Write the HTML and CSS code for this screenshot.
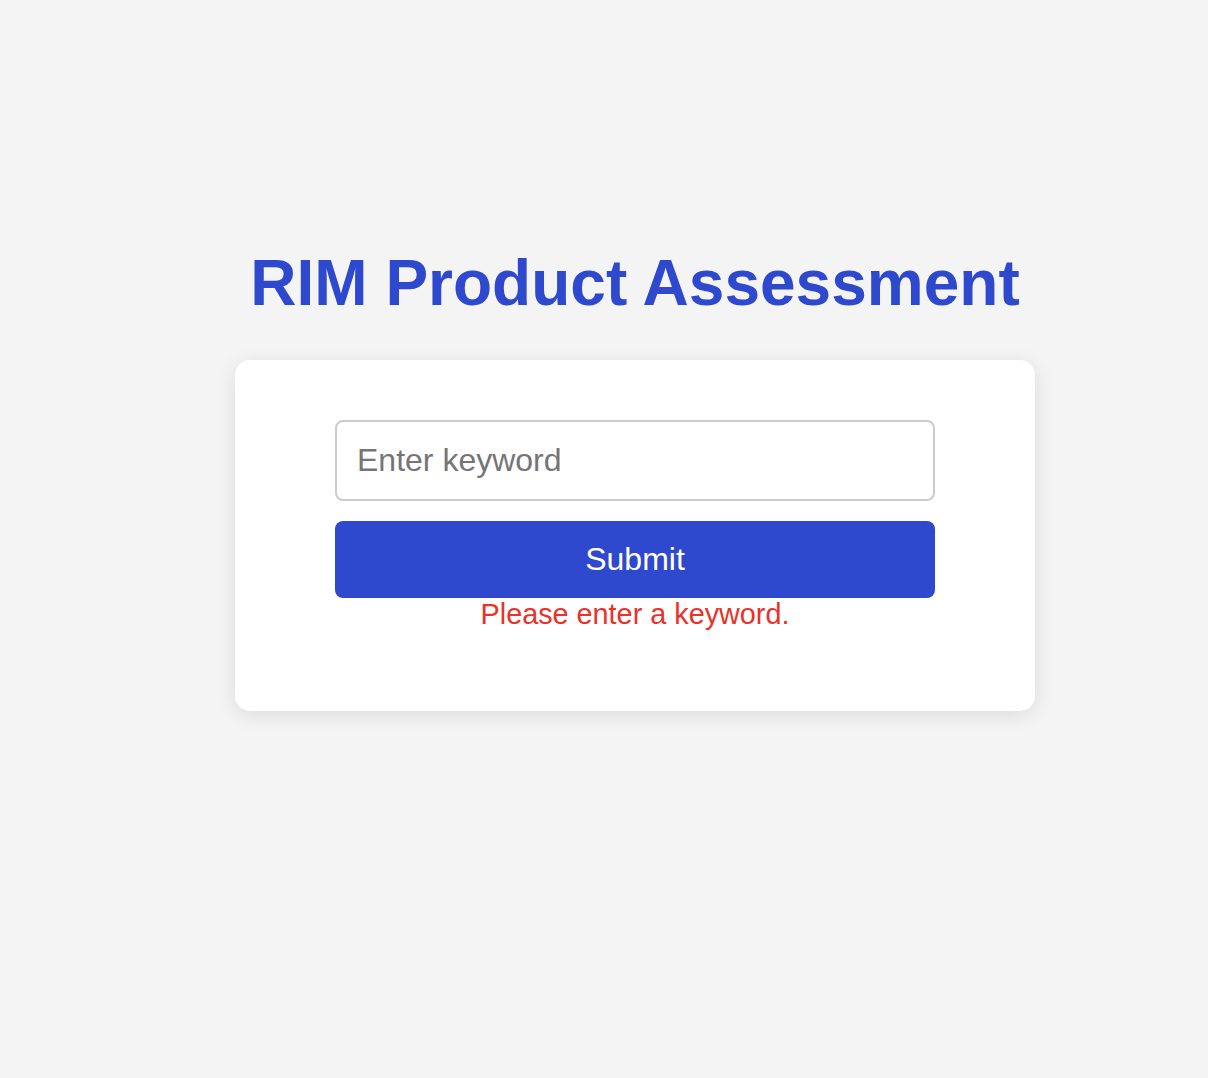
FILE: index.html
```html
<!DOCTYPE html>
<html lang="en">
<head>
<meta charset="utf-8">
<title>RIM Product Assessment</title>
<link rel="stylesheet" href="styles.css">
</head>
<body>
<main class="page">
  <h1 class="title">RIM Product Assessment</h1>
  <section class="card">
    <form class="form">
      <input class="field" type="text" placeholder="Enter keyword">
      <button class="submit" type="button">Submit</button>
      <p class="error">Please enter a keyword.</p>
    </form>
  </section>
</main>
</body>
</html>
```

FILE: styles.css
```css
html, body {
  margin: 0;
  padding: 0;
}
body {
  background: #f4f4f4;
  font-family: "Liberation Sans", Arial, sans-serif;
  min-height: 1078px;
}
.page {
  display: flex;
  flex-direction: column;
  align-items: center;
  padding-top: 246px;
  padding-left: 62px;
}
.title {
  margin: 0 0 40px;
  font-size: 64px;
  font-weight: bold;
  line-height: 74px;
  color: #2e49cd;
}
.card {
  box-sizing: border-box;
  width: 800px;
  background: #ffffff;
  border-radius: 15px;
  padding: 60px 100px;
  box-shadow: 0 4px 20px rgba(0, 0, 0, 0.1);
}
.form {
  display: flex;
  flex-direction: column;
  align-items: stretch;
}
.field {
  box-sizing: border-box;
  height: 81px;
  padding: 20px;
  border: 2px solid #cccccc;
  border-radius: 8px;
  font-family: "Liberation Sans", Arial, sans-serif;
  font-size: 32px;
  color: #333;
  background: #fff;
  outline: none;
}
.field::placeholder {
  color: #757575;
}
.submit {
  margin-top: 20px;
  height: 77px;
  border: none;
  border-radius: 8px;
  background: #2e49cd;
  color: #ffffff;
  font-family: "Liberation Sans", Arial, sans-serif;
  font-size: 32px;
  cursor: pointer;
}
.error {
  margin: 0 0 20px;
  text-align: center;
  color: #e8322a;
  font-size: 28.8px;
  line-height: 33px;
}
```
